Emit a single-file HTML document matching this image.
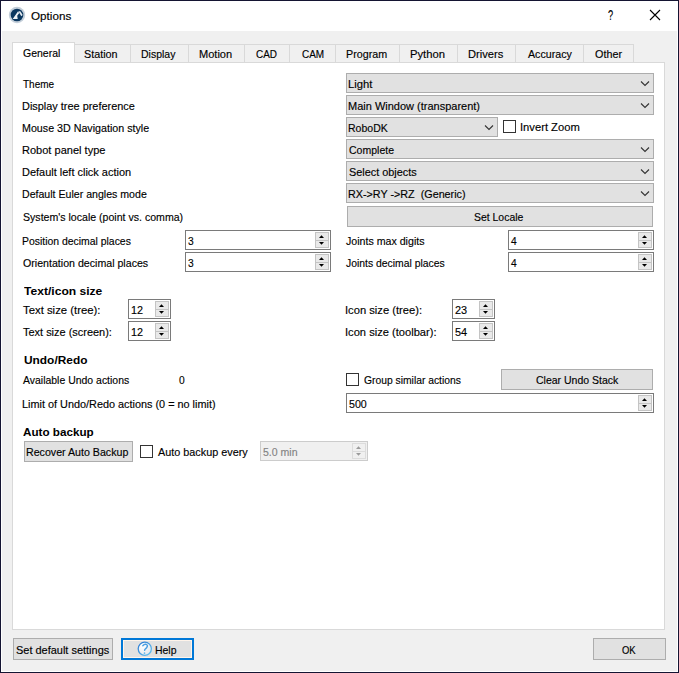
<!DOCTYPE html>
<html><head><meta charset="utf-8"><style>
html,body{margin:0;padding:0;width:679px;height:673px;overflow:hidden;background:#f0f0f0}
.a{position:absolute;box-sizing:border-box}
.t{position:absolute;white-space:pre;font-family:'Liberation Sans', sans-serif;transform-origin:0 0;-webkit-text-stroke:0.15px currentColor}
.t.b{-webkit-text-stroke:0}
</style></head><body>
<div class="a" style="left:0px;top:0px;width:679px;height:673px;background:#f0f0f0;border:1px solid #141432;"></div>
<div class="a" style="left:1px;top:1px;width:677px;height:30px;background:#ffffff;"></div>
<div class="a" style="left:1px;top:31px;width:1px;height:641px;background:#ffffff;"></div>
<div class="a" style="left:677px;top:31px;width:1px;height:641px;background:#ffffff;"></div>
<div class="a" style="left:1px;top:671px;width:677px;height:1px;background:#ffffff;"></div>
<svg class="a" style="left:0;top:0" width="30" height="30" viewBox="0 0 30 30">
<circle cx="17" cy="15" r="8.2" fill="#c3ced9"/><circle cx="17" cy="15" r="6.3" fill="#0b375f"/>
<path d="M12.7 19 L17.7 19 L17.2 15.8 L19.3 12.9 L17.9 11.4 Z" fill="#eef2f6"/>
<path d="M18.3 11.3 L20.3 11.3 L22.7 15.1 L21.3 16.2 Z" fill="#e3e9ef"/>
</svg>
<div class="t" style="left:31.00px;top:10.50px;font-size:11.5px;line-height:11.5px;color:#000;transform:scaleX(1.0150)">Options</div>
<div class="t" style="left:607.70px;top:8.30px;font-size:14px;line-height:14px;color:#000;transform:scaleX(0.6625)">?</div>
<svg class="a" style="left:649px;top:9px" width="12" height="12" viewBox="0 0 12 12"><path d="M1 1 L11 11 M11 1 L1 11" stroke="#000" stroke-width="1.1" fill="none"/></svg>
<div class="a" style="left:12px;top:62px;width:653px;height:568px;background:#ffffff;border:1px solid #d9d9d9;"></div>
<div class="a" style="left:74px;top:44px;width:57px;height:19px;background:#f0f0f0;border:1px solid #d9d9d9;"></div>
<div class="t" style="left:84.20px;top:49.00px;font-size:11.5px;line-height:11.5px;color:#000;transform:scaleX(0.9389)">Station</div>
<div class="a" style="left:130px;top:44px;width:59px;height:19px;background:#f0f0f0;border:1px solid #d9d9d9;"></div>
<div class="t" style="left:141.29px;top:49.00px;font-size:11.5px;line-height:11.5px;color:#000;transform:scaleX(0.9135)">Display</div>
<div class="a" style="left:188px;top:44px;width:57px;height:19px;background:#f0f0f0;border:1px solid #d9d9d9;"></div>
<div class="t" style="left:199.34px;top:49.00px;font-size:11.5px;line-height:11.5px;color:#000;transform:scaleX(0.9606)">Motion</div>
<div class="a" style="left:244px;top:44px;width:46px;height:19px;background:#f0f0f0;border:1px solid #d9d9d9;"></div>
<div class="t" style="left:256.40px;top:49.00px;font-size:11.5px;line-height:11.5px;color:#000;transform:scaleX(0.8667)">CAD</div>
<div class="a" style="left:289px;top:44px;width:47px;height:19px;background:#f0f0f0;border:1px solid #d9d9d9;"></div>
<div class="t" style="left:301.60px;top:49.00px;font-size:11.5px;line-height:11.5px;color:#000;transform:scaleX(0.8680)">CAM</div>
<div class="a" style="left:335px;top:44px;width:65px;height:19px;background:#f0f0f0;border:1px solid #d9d9d9;"></div>
<div class="t" style="left:346.27px;top:49.00px;font-size:11.5px;line-height:11.5px;color:#000;transform:scaleX(0.9326)">Program</div>
<div class="a" style="left:399px;top:44px;width:59px;height:19px;background:#f0f0f0;border:1px solid #d9d9d9;"></div>
<div class="t" style="left:409.92px;top:49.00px;font-size:11.5px;line-height:11.5px;color:#000;transform:scaleX(0.9771)">Python</div>
<div class="a" style="left:457px;top:44px;width:59px;height:19px;background:#f0f0f0;border:1px solid #d9d9d9;"></div>
<div class="t" style="left:468.23px;top:49.00px;font-size:11.5px;line-height:11.5px;color:#000;transform:scaleX(0.9686)">Drivers</div>
<div class="a" style="left:515px;top:44px;width:69px;height:19px;background:#f0f0f0;border:1px solid #d9d9d9;"></div>
<div class="t" style="left:527.70px;top:49.00px;font-size:11.5px;line-height:11.5px;color:#000;transform:scaleX(0.9255)">Accuracy</div>
<div class="a" style="left:583px;top:44px;width:51px;height:19px;background:#f0f0f0;border:1px solid #d9d9d9;"></div>
<div class="t" style="left:595.40px;top:49.00px;font-size:11.5px;line-height:11.5px;color:#000;transform:scaleX(0.9379)">Other</div>
<div class="a" style="left:12px;top:42px;width:63px;height:21px;background:#ffffff;border:1px solid #d9d9d9;border-bottom:none;"></div>
<div class="t" style="left:23.30px;top:48.00px;font-size:11.5px;line-height:11.5px;color:#000;transform:scaleX(0.9125)">General</div>
<div class="t" style="left:22.60px;top:79.00px;font-size:11.5px;line-height:11.5px;color:#000;transform:scaleX(0.8667)">Theme</div>
<div class="t" style="left:21.65px;top:101.00px;font-size:11.5px;line-height:11.5px;color:#000;transform:scaleX(0.9492)">Display tree preference</div>
<div class="t" style="left:21.67px;top:123.00px;font-size:11.5px;line-height:11.5px;color:#000;transform:scaleX(0.9294)">Mouse 3D Navigation style</div>
<div class="t" style="left:21.64px;top:145.00px;font-size:11.5px;line-height:11.5px;color:#000;transform:scaleX(0.9593)">Robot panel type</div>
<div class="t" style="left:21.65px;top:167.00px;font-size:11.5px;line-height:11.5px;color:#000;transform:scaleX(0.9540)">Default left click action</div>
<div class="t" style="left:21.68px;top:189.00px;font-size:11.5px;line-height:11.5px;color:#000;transform:scaleX(0.9207)">Default Euler angles mode</div>
<div class="t" style="left:22.60px;top:212.00px;font-size:11.5px;line-height:11.5px;color:#000;transform:scaleX(0.9195)">System&#x27;s locale (point vs. comma)</div>
<div class="t" style="left:21.69px;top:236.00px;font-size:11.5px;line-height:11.5px;color:#000;transform:scaleX(0.9059)">Position decimal places</div>
<div class="t" style="left:22.60px;top:258.00px;font-size:11.5px;line-height:11.5px;color:#000;transform:scaleX(0.9237)">Orientation decimal places</div>
<div class="a" style="left:346px;top:73px;width:308px;height:20px;background:#e1e1e1;border:1px solid #adadad;"></div>
<div class="t" style="left:348.22px;top:79.00px;font-size:11.5px;line-height:11.5px;color:#000;transform:scaleX(0.9792)">Light</div>
<svg class="a" style="left:640px;top:80px" width="10" height="7" viewBox="0 0 10 7"><path d="M1 1.5 L5 5.5 L9 1.5" fill="none" stroke="#333" stroke-width="1.1"/></svg>
<div class="a" style="left:346px;top:95px;width:308px;height:20px;background:#e1e1e1;border:1px solid #adadad;"></div>
<div class="t" style="left:348.24px;top:101.00px;font-size:11.5px;line-height:11.5px;color:#000;transform:scaleX(0.9562)">Main Window (transparent)</div>
<svg class="a" style="left:640px;top:102px" width="10" height="7" viewBox="0 0 10 7"><path d="M1 1.5 L5 5.5 L9 1.5" fill="none" stroke="#333" stroke-width="1.1"/></svg>
<div class="a" style="left:346px;top:117px;width:152px;height:20px;background:#e1e1e1;border:1px solid #adadad;"></div>
<div class="t" style="left:348.29px;top:123.00px;font-size:11.5px;line-height:11.5px;color:#000;transform:scaleX(0.9143)">RoboDK</div>
<svg class="a" style="left:484px;top:124px" width="10" height="7" viewBox="0 0 10 7"><path d="M1 1.5 L5 5.5 L9 1.5" fill="none" stroke="#333" stroke-width="1.1"/></svg>
<div class="a" style="left:503px;top:120px;width:13px;height:13px;background:#ffffff;border:1px solid #333333;"></div>
<div class="t" style="left:519.73px;top:122.00px;font-size:11.5px;line-height:11.5px;color:#000;transform:scaleX(0.9733)">Invert Zoom</div>
<div class="a" style="left:346px;top:139px;width:308px;height:20px;background:#e1e1e1;border:1px solid #adadad;"></div>
<div class="t" style="left:349.20px;top:145.00px;font-size:11.5px;line-height:11.5px;color:#000;transform:scaleX(0.9143)">Complete</div>
<svg class="a" style="left:640px;top:146px" width="10" height="7" viewBox="0 0 10 7"><path d="M1 1.5 L5 5.5 L9 1.5" fill="none" stroke="#333" stroke-width="1.1"/></svg>
<div class="a" style="left:346px;top:161px;width:308px;height:20px;background:#e1e1e1;border:1px solid #adadad;"></div>
<div class="t" style="left:349.20px;top:167.00px;font-size:11.5px;line-height:11.5px;color:#000;transform:scaleX(0.9451)">Select objects</div>
<svg class="a" style="left:640px;top:168px" width="10" height="7" viewBox="0 0 10 7"><path d="M1 1.5 L5 5.5 L9 1.5" fill="none" stroke="#333" stroke-width="1.1"/></svg>
<div class="a" style="left:346px;top:183px;width:308px;height:20px;background:#e1e1e1;border:1px solid #adadad;"></div>
<div class="t" style="left:348.26px;top:189.00px;font-size:11.5px;line-height:11.5px;color:#000;transform:scaleX(0.9371)">RX-&gt;RY -&gt;RZ  (Generic)</div>
<svg class="a" style="left:640px;top:190px" width="10" height="7" viewBox="0 0 10 7"><path d="M1 1.5 L5 5.5 L9 1.5" fill="none" stroke="#333" stroke-width="1.1"/></svg>
<div class="a" style="left:347px;top:206px;width:306px;height:21px;background:#e1e1e1;border:1px solid #adadad;"></div>
<div class="t" style="left:474.20px;top:212.00px;font-size:11.5px;line-height:11.5px;color:#000;transform:scaleX(0.9074)">Set Locale</div>
<div class="a" style="left:185px;top:230px;width:146px;height:20px;background:#ffffff;border:1px solid #7a7a7a;"></div>
<div class="t" style="left:188.00px;top:236.00px;font-size:11.5px;line-height:11.5px;color:#000;transform:scaleX(0.8900)">3</div>
<div class="a" style="left:315px;top:232px;width:14px;height:9px;background:#e9e9e9;border:1px solid #c4c4c4;"></div>
<div class="a" style="left:315px;top:240px;width:14px;height:8px;background:#e9e9e9;border:1px solid #c4c4c4;"></div>
<svg class="a" style="left:0;top:0" width="679" height="673"><path d="M319 238 L324 238 L321.5 235.3 Z M319 242 L324 242 L321.5 244.7 Z" fill="#000"/></svg>
<div class="a" style="left:185px;top:252px;width:146px;height:20px;background:#ffffff;border:1px solid #7a7a7a;"></div>
<div class="t" style="left:188.00px;top:258.00px;font-size:11.5px;line-height:11.5px;color:#000;transform:scaleX(0.8900)">3</div>
<div class="a" style="left:315px;top:254px;width:14px;height:9px;background:#e9e9e9;border:1px solid #c4c4c4;"></div>
<div class="a" style="left:315px;top:262px;width:14px;height:8px;background:#e9e9e9;border:1px solid #c4c4c4;"></div>
<svg class="a" style="left:0;top:0" width="679" height="673"><path d="M319 260 L324 260 L321.5 257.3 Z M319 264 L324 264 L321.5 266.7 Z" fill="#000"/></svg>
<div class="t" style="left:345.90px;top:236.00px;font-size:11.5px;line-height:11.5px;color:#000;transform:scaleX(0.9235)">Joints max digits</div>
<div class="t" style="left:345.90px;top:258.00px;font-size:11.5px;line-height:11.5px;color:#000;transform:scaleX(0.9028)">Joints decimal places</div>
<div class="a" style="left:508px;top:230px;width:146px;height:20px;background:#ffffff;border:1px solid #7a7a7a;"></div>
<div class="t" style="left:511.00px;top:236.00px;font-size:11.5px;line-height:11.5px;color:#000;transform:scaleX(0.8900)">4</div>
<div class="a" style="left:638px;top:232px;width:14px;height:9px;background:#e9e9e9;border:1px solid #c4c4c4;"></div>
<div class="a" style="left:638px;top:240px;width:14px;height:8px;background:#e9e9e9;border:1px solid #c4c4c4;"></div>
<svg class="a" style="left:0;top:0" width="679" height="673"><path d="M642 238 L647 238 L644.5 235.3 Z M642 242 L647 242 L644.5 244.7 Z" fill="#000"/></svg>
<div class="a" style="left:508px;top:252px;width:146px;height:20px;background:#ffffff;border:1px solid #7a7a7a;"></div>
<div class="t" style="left:511.00px;top:258.00px;font-size:11.5px;line-height:11.5px;color:#000;transform:scaleX(0.8900)">4</div>
<div class="a" style="left:638px;top:254px;width:14px;height:9px;background:#e9e9e9;border:1px solid #c4c4c4;"></div>
<div class="a" style="left:638px;top:262px;width:14px;height:8px;background:#e9e9e9;border:1px solid #c4c4c4;"></div>
<svg class="a" style="left:0;top:0" width="679" height="673"><path d="M642 260 L647 260 L644.5 257.3 Z M642 264 L647 264 L644.5 266.7 Z" fill="#000"/></svg>
<div class="t b" style="left:24.10px;top:286.00px;font-size:11.5px;line-height:11.5px;font-weight:bold;color:#000;transform:scaleX(1.0507)">Text/icon size</div>
<div class="t" style="left:23.20px;top:305.00px;font-size:11.5px;line-height:11.5px;color:#000;transform:scaleX(0.9859)">Text size (tree):</div>
<div class="t" style="left:23.20px;top:327.00px;font-size:11.5px;line-height:11.5px;color:#000;transform:scaleX(0.9527)">Text size (screen):</div>
<div class="a" style="left:128px;top:299px;width:43px;height:20px;background:#ffffff;border:1px solid #7a7a7a;"></div>
<div class="t" style="left:130.76px;top:305.00px;font-size:11.5px;line-height:11.5px;color:#000;transform:scaleX(0.9417)">12</div>
<div class="a" style="left:155px;top:301px;width:14px;height:9px;background:#e9e9e9;border:1px solid #c4c4c4;"></div>
<div class="a" style="left:155px;top:309px;width:14px;height:8px;background:#e9e9e9;border:1px solid #c4c4c4;"></div>
<svg class="a" style="left:0;top:0" width="679" height="673"><path d="M159 307 L164 307 L161.5 304.3 Z M159 311 L164 311 L161.5 313.7 Z" fill="#000"/></svg>
<div class="a" style="left:128px;top:321px;width:43px;height:20px;background:#ffffff;border:1px solid #7a7a7a;"></div>
<div class="t" style="left:130.76px;top:327.00px;font-size:11.5px;line-height:11.5px;color:#000;transform:scaleX(0.9417)">12</div>
<div class="a" style="left:155px;top:323px;width:14px;height:9px;background:#e9e9e9;border:1px solid #c4c4c4;"></div>
<div class="a" style="left:155px;top:331px;width:14px;height:8px;background:#e9e9e9;border:1px solid #c4c4c4;"></div>
<svg class="a" style="left:0;top:0" width="679" height="673"><path d="M159 329 L164 329 L161.5 326.3 Z M159 333 L164 333 L161.5 335.7 Z" fill="#000"/></svg>
<div class="t" style="left:344.93px;top:305.00px;font-size:11.5px;line-height:11.5px;color:#000;transform:scaleX(0.9731)">Icon size (tree):</div>
<div class="t" style="left:344.93px;top:327.00px;font-size:11.5px;line-height:11.5px;color:#000;transform:scaleX(0.9677)">Icon size (toolbar):</div>
<div class="a" style="left:452px;top:299px;width:43px;height:20px;background:#ffffff;border:1px solid #7a7a7a;"></div>
<div class="t" style="left:455.00px;top:305.00px;font-size:11.5px;line-height:11.5px;color:#000;transform:scaleX(0.9462)">23</div>
<div class="a" style="left:479px;top:301px;width:14px;height:9px;background:#e9e9e9;border:1px solid #c4c4c4;"></div>
<div class="a" style="left:479px;top:309px;width:14px;height:8px;background:#e9e9e9;border:1px solid #c4c4c4;"></div>
<svg class="a" style="left:0;top:0" width="679" height="673"><path d="M483 307 L488 307 L485.5 304.3 Z M483 311 L488 311 L485.5 313.7 Z" fill="#000"/></svg>
<div class="a" style="left:452px;top:321px;width:43px;height:20px;background:#ffffff;border:1px solid #7a7a7a;"></div>
<div class="t" style="left:455.00px;top:327.00px;font-size:11.5px;line-height:11.5px;color:#000;transform:scaleX(0.9462)">54</div>
<div class="a" style="left:479px;top:323px;width:14px;height:9px;background:#e9e9e9;border:1px solid #c4c4c4;"></div>
<div class="a" style="left:479px;top:331px;width:14px;height:8px;background:#e9e9e9;border:1px solid #c4c4c4;"></div>
<svg class="a" style="left:0;top:0" width="679" height="673"><path d="M483 329 L488 329 L485.5 326.3 Z M483 333 L488 333 L485.5 335.7 Z" fill="#000"/></svg>
<div class="t b" style="left:23.60px;top:355.00px;font-size:11.5px;line-height:11.5px;font-weight:bold;color:#000;transform:scaleX(1.0344)">Undo/Redo</div>
<div class="t" style="left:22.60px;top:375.00px;font-size:11.5px;line-height:11.5px;color:#000;transform:scaleX(0.9094)">Available Undo actions</div>
<div class="t" style="left:178.80px;top:375.00px;font-size:11.5px;line-height:11.5px;color:#000;transform:scaleX(0.8900)">0</div>
<div class="a" style="left:346px;top:373px;width:13px;height:13px;background:#ffffff;border:1px solid #333333;"></div>
<div class="t" style="left:363.90px;top:375.00px;font-size:11.5px;line-height:11.5px;color:#000;transform:scaleX(0.8972)">Group similar actions</div>
<div class="a" style="left:501px;top:369px;width:152px;height:21px;background:#e1e1e1;border:1px solid #adadad;"></div>
<div class="t" style="left:535.60px;top:375.00px;font-size:11.5px;line-height:11.5px;color:#000;transform:scaleX(0.9133)">Clear Undo Stack</div>
<div class="t" style="left:21.66px;top:399.00px;font-size:11.5px;line-height:11.5px;color:#000;transform:scaleX(0.9448)">Limit of Undo/Redo actions (0 = no limit)</div>
<div class="a" style="left:346px;top:393px;width:308px;height:20px;background:#ffffff;border:1px solid #7a7a7a;"></div>
<div class="t" style="left:349.00px;top:399.00px;font-size:11.5px;line-height:11.5px;color:#000;transform:scaleX(0.9263)">500</div>
<div class="a" style="left:638px;top:395px;width:14px;height:9px;background:#e9e9e9;border:1px solid #c4c4c4;"></div>
<div class="a" style="left:638px;top:403px;width:14px;height:8px;background:#e9e9e9;border:1px solid #c4c4c4;"></div>
<svg class="a" style="left:0;top:0" width="679" height="673"><path d="M642 401 L647 401 L644.5 398.3 Z M642 405 L647 405 L644.5 407.7 Z" fill="#000"/></svg>
<div class="t b" style="left:23.30px;top:427.00px;font-size:11.5px;line-height:11.5px;font-weight:bold;color:#000;transform:scaleX(1.0145)">Auto backup</div>
<div class="a" style="left:24px;top:441px;width:109px;height:21px;background:#e1e1e1;border:1px solid #adadad;"></div>
<div class="t" style="left:25.87px;top:447.00px;font-size:11.5px;line-height:11.5px;color:#000;transform:scaleX(0.9255)">Recover Auto Backup</div>
<div class="a" style="left:140px;top:445px;width:13px;height:13px;background:#ffffff;border:1px solid #333333;"></div>
<div class="t" style="left:158.30px;top:447.00px;font-size:11.5px;line-height:11.5px;color:#000;transform:scaleX(0.9421)">Auto backup every</div>
<div class="a" style="left:260px;top:441px;width:108px;height:20px;background:#f0f0f0;border:1px solid #cccccc;"></div>
<div class="t" style="left:263.00px;top:447.00px;font-size:11.5px;line-height:11.5px;color:#838383;transform:scaleX(0.9162)">5.0 min</div>
<div class="a" style="left:352px;top:443px;width:14px;height:9px;background:#f0f0f0;border:1px solid #dcdcdc;"></div>
<div class="a" style="left:352px;top:451px;width:14px;height:8px;background:#f0f0f0;border:1px solid #dcdcdc;"></div>
<svg class="a" style="left:0;top:0" width="679" height="673"><path d="M356 449 L361 449 L358.5 446.3 Z M356 453 L361 453 L358.5 455.7 Z" fill="#9a9a9a"/></svg>
<div class="a" style="left:13px;top:638px;width:100px;height:22px;background:#e1e1e1;border:1px solid #adadad;"></div>
<div class="t" style="left:15.90px;top:645.00px;font-size:11.5px;line-height:11.5px;color:#000;transform:scaleX(0.9531)">Set default settings</div>
<div class="a" style="left:121px;top:638px;width:73px;height:22px;background:#e1e1e1;border:2px solid #0078d7;box-shadow: inset 0 0 0 1px #fff4ea;"></div>
<svg class="a" style="left:137px;top:641px" width="16" height="16" viewBox="0 0 16 16">
<defs><linearGradient id="qs" x1="0" y1="0" x2="1" y2="1"><stop offset="0" stop-color="#2a78d2"/><stop offset="1" stop-color="#66c6f2"/></linearGradient>
<radialGradient id="qg" cx="0.35" cy="0.3" r="0.8"><stop offset="0" stop-color="#ffffff"/><stop offset="1" stop-color="#e2e6ea"/></radialGradient></defs>
<circle cx="7.8" cy="7.8" r="6.6" fill="url(#qg)" stroke="url(#qs)" stroke-width="1.3"/>
<path d="M5.8 4.7 Q7.2 3 9 3.3 Q10.8 3.8 10.3 5.6 Q9.8 6.9 8.5 7.8 Q7.7 8.5 7.6 9.4" fill="none" stroke="#4a9fe2" stroke-width="1.4" stroke-linecap="round"/>
<circle cx="7.5" cy="12.1" r="0.85" fill="#5ab4ea"/>
</svg>
<div class="t" style="left:155.49px;top:645.00px;font-size:11.5px;line-height:11.5px;color:#000;transform:scaleX(0.9087)">Help</div>
<div class="a" style="left:593px;top:638px;width:73px;height:22px;background:#e1e1e1;border:1px solid #adadad;"></div>
<div class="t" style="left:621.80px;top:645.00px;font-size:11.5px;line-height:11.5px;color:#000;transform:scaleX(0.8235)">OK</div>
</body></html>
